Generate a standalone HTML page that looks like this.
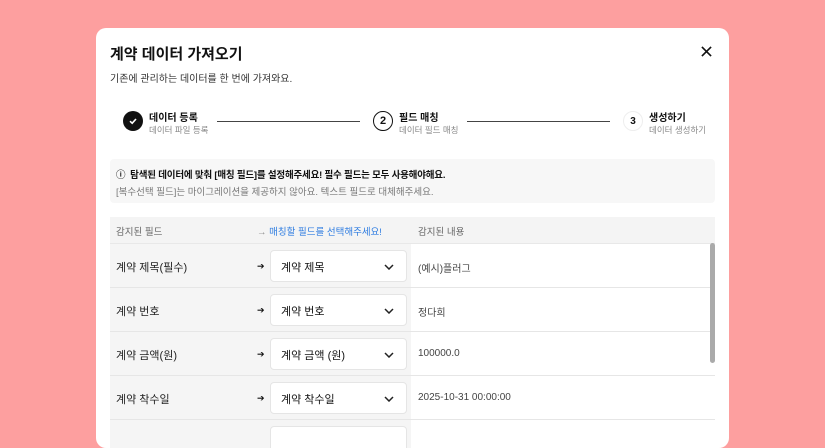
<!DOCTYPE html>
<html><head><meta charset="utf-8"><style>
*{margin:0;padding:0;box-sizing:border-box}
body{width:825px;height:432px;overflow:hidden;background:#fd9f9f;font-family:"Liberation Sans","Noto Sans CJK KR",sans-serif;color:#111;position:relative}
.modal{position:absolute;left:96px;top:28px;width:633px;height:420px;background:#fff;border-radius:10px;overflow:hidden}
.abs{position:absolute}
.title{left:14px;top:15px;font-size:15px;font-weight:700}
.sub{left:14px;top:42px;font-size:10px;color:#333}
.close{left:605px;top:18px}
.step-c{width:20px;height:20px;border-radius:50%;display:flex;align-items:center;justify-content:center;font-size:11px;font-weight:700}
.st{font-size:10px;font-weight:700}
.ss{font-size:8.5px;color:#888}
.line{height:1px;background:#444}
.info{left:14px;top:131px;width:605px;height:44px;background:#f7f7f7;border-radius:4px}
.tbl{left:14px;top:189px;width:605px}
.hdr{height:27px;background:#f4f4f4;border-bottom:1px solid #e8e8e8;font-size:9.5px;color:#666;position:relative}
.row{height:44px;border-bottom:1px solid #e6e6e6;position:relative}
.row .l{position:absolute;left:0;top:0;width:301px;height:43px;background:#f5f5f5}
.row .lt{position:absolute;left:6px;top:15px;font-size:11px;color:#222}
.row .ar{position:absolute;left:147px;top:17px;font-size:9px}
.sel{position:absolute;left:160px;top:6px;width:137px;height:32px;background:#fff;border:1px solid #e5e5e5;border-radius:4px;font-size:11px;padding:8px 0 0 10px}
.sel svg{position:absolute;right:12px;top:13px}
.row .v{position:absolute;left:308px;top:16px;font-size:10px;color:#444}
</style></head><body>
<div class="modal">
<div class="abs title">계약 데이터 가져오기</div>
<div class="abs sub">기존에 관리하는 데이터를 한 번에 가져와요.</div>
<svg class="abs close" width="11" height="11" viewBox="0 0 12 12"><path d="M1 1L11 11M11 1L1 11" stroke="#111" stroke-width="1.8"/></svg>

<div class="abs step-c" style="left:27px;top:83px;background:#111"><svg width="10" height="10" viewBox="0 0 10 10"><path d="M2 5.2L4.2 7.2L8 3" stroke="#fff" stroke-width="1.6" fill="none"/></svg></div>
<div class="abs st" style="left:53px;top:81px">데이터 등록</div>
<div class="abs ss" style="left:53px;top:96px">데이터 파일 등록</div>
<div class="abs line" style="left:121px;top:93px;width:143px"></div>
<div class="abs step-c" style="left:277px;top:83px;border:1.3px solid #111">2</div>
<div class="abs st" style="left:303px;top:81px">필드 매칭</div>
<div class="abs ss" style="left:303px;top:96px">데이터 필드 매칭</div>
<div class="abs line" style="left:371px;top:93px;width:143px"></div>
<div class="abs step-c" style="left:527px;top:83px;border:1px solid #eee;font-size:10px">3</div>
<div class="abs st" style="left:553px;top:81px">생성하기</div>
<div class="abs ss" style="left:553px;top:96px">데이터 생성하기</div>

<div class="abs info">
<div class="abs" style="left:6px;top:8px;font-size:9.5px;font-weight:700;color:#111;letter-spacing:-0.2px">ⓘ&nbsp; 탐색된 데이터에 맞춰 [매칭 필드]를 설정해주세요! 필수 필드는 모두 사용해야해요.</div>
<div class="abs" style="left:6px;top:25px;font-size:9.5px;color:#777">[복수선택 필드]는 마이그레이션을 제공하지 않아요. 텍스트 필드로 대체해주세요.</div>
</div>

<div class="abs tbl">
<div class="hdr"><span class="abs" style="left:6px;top:7px">감지된 필드</span><span class="abs" style="left:147px;top:7px;color:#888">→ <span style="color:#2f7de1">매칭할 필드를 선택해주세요!</span></span><span class="abs" style="left:308px;top:7px">감지된 내용</span></div>
<div class="row"><div class="l"></div><span class="lt">계약 제목(필수)</span><span class="ar">➔</span><div class="sel">계약 제목<svg width="10" height="6" viewBox="0 0 10 6"><path d="M1 1L5 5L9 1" stroke="#222" stroke-width="1.5" fill="none"/></svg></div><span class="v">(예시)플러그</span></div>
<div class="row"><div class="l"></div><span class="lt">계약 번호</span><span class="ar">➔</span><div class="sel">계약 번호<svg width="10" height="6" viewBox="0 0 10 6"><path d="M1 1L5 5L9 1" stroke="#222" stroke-width="1.5" fill="none"/></svg></div><span class="v">정다희</span></div>
<div class="row"><div class="l"></div><span class="lt">계약 금액(원)</span><span class="ar">➔</span><div class="sel">계약 금액 (원)<svg width="10" height="6" viewBox="0 0 10 6"><path d="M1 1L5 5L9 1" stroke="#222" stroke-width="1.5" fill="none"/></svg></div><span class="v">100000.0</span></div>
<div class="row"><div class="l"></div><span class="lt">계약 착수일</span><span class="ar">➔</span><div class="sel">계약 착수일<svg width="10" height="6" viewBox="0 0 10 6"><path d="M1 1L5 5L9 1" stroke="#222" stroke-width="1.5" fill="none"/></svg></div><span class="v">2025-10-31 00:00:00</span></div>
<div class="row"><div class="l"></div><div class="sel"></div></div>
</div>
<div class="abs" style="left:614px;top:215px;width:5px;height:120px;background:#aaa;border-radius:3px"></div>
</div>
</body></html>
